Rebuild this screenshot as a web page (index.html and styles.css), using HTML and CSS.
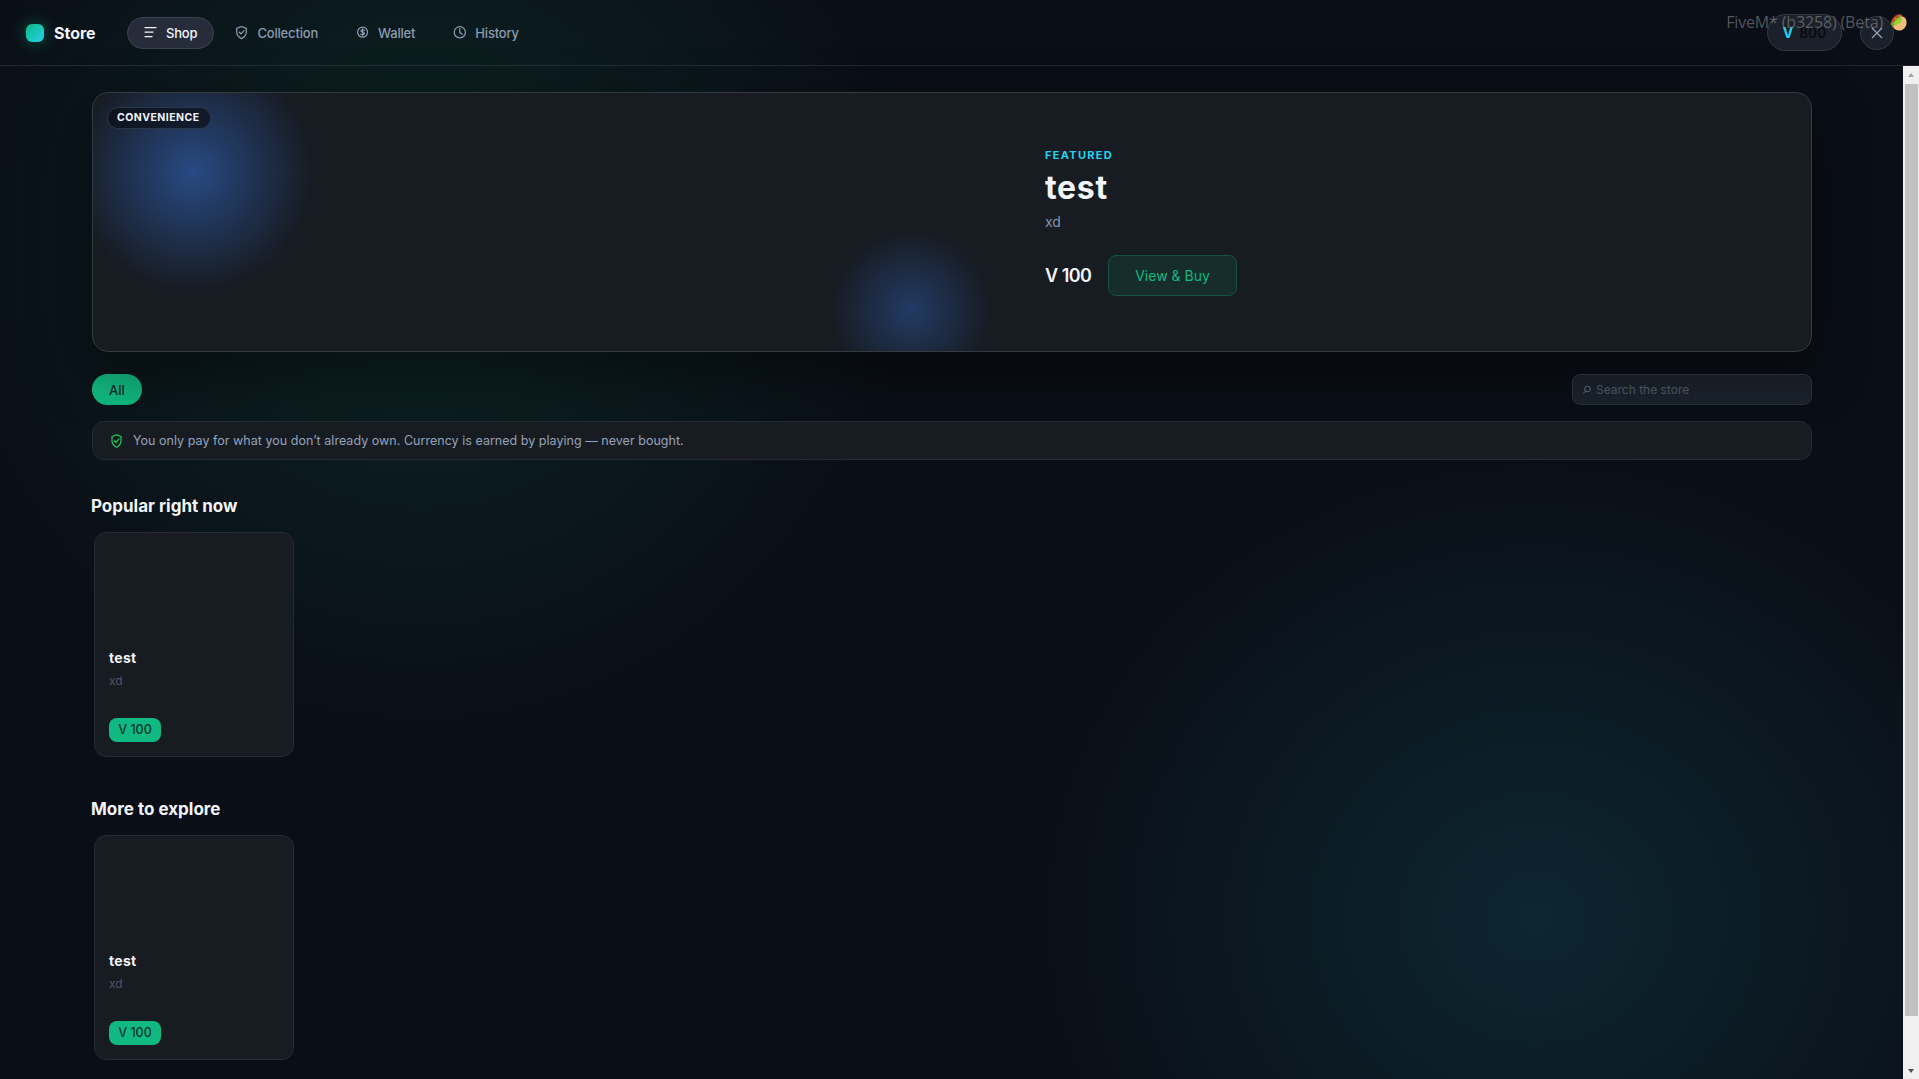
FILE: index.html
```html
<!DOCTYPE html>
<html lang="en">
  <head>
    <meta charset="UTF-8" />
    <meta name="viewport" content="width=device-width, initial-scale=1.0" />
    <title>Store</title>
    <link rel="stylesheet" href="styles.css">
  </head>
  <body>
    <header class="topbar">
      <div class="brand">
        <span class="logo"></span>
        <span class="brand-name">Store</span>
      </div>
      <nav class="tabs">
        <button class="tab active">
          <svg class="icon" viewBox="0 0 14 14"><path d="M1 1.5h11M1 6h8M1 10.5h7" /></svg>
          <span>Shop</span>
        </button>
        <button class="tab">
          <svg class="icon" viewBox="0 0 14 14"><path d="M6.5 0.5L11.3 2.3V6.3C11.3 9.1 9.3 11.2 6.5 12.6C3.7 11.2 1.7 9.1 1.7 6.3V2.3ZM4.3 6.2l1.7 1.7L9 4.6" /></svg>
          <span>Collection</span>
        </button>
        <button class="tab">
          <svg class="icon" viewBox="0 0 14 14"><circle cx="6.6" cy="6.2" r="5" /><path d="M8.4 4.3C7.9 3.7 5 3.5 5 5C5 6.6 8.4 5.7 8.4 7.5C8.4 8.9 5.3 8.8 4.800 8.100M6.700 2.800v7" /></svg>
          <span>Wallet</span>
        </button>
        <button class="tab">
          <svg class="icon" viewBox="0 0 14 14"><circle cx="6.8" cy="6.3" r="5.6" /><path d="M6.8 2.700v3.800l2.500 1.700" /></svg>
          <span>History</span>
        </button>
      </nav>
      <div class="account">
        <div class="balance"><span class="coin">V</span><span>800</span></div>
        <button class="close"><svg class="close-icon" viewBox="0 0 12 12"><path d="M1 1l10 10M11 1L1 11" /></svg></button>
      </div>
    </header>

    <div class="watermark">
      <span>FiveM* (b3258) (Beta)</span>
      <svg class="taco" viewBox="0 0 17 17">
        <path d="M0.500 10L2 5L6 1L10 0L13 2L9 14L3 13Z" fill="#b93a22" />
        <path d="M1 10L4 4L9 1L12 2L12 8L7 14L3 13Z" fill="#6fb52a" />
        <path d="M2 8l3-3M6 4l3-2" stroke="#e23c2c" stroke-width="2" />
        <path d="M3 13C5 10 7 8 9 5C11 2 14 2 15.500 4.500C18 9 16 14 12 16C9 17.200 5 16.500 3 13Z" fill="#f3bd79" />
        <path d="M4 10C5 6 9 3 12 4C13 7 9 11 5 11Z" fill="#8ed630" />
      </svg>
    </div>

    <div class="viewport">
      <main class="page">
        <section class="hero">
          <div class="hero-art"><span class="badge">CONVENIENCE</span></div>
          <div class="hero-info">
            <p class="eyebrow">FEATURED</p>
            <h1>test</h1>
            <p class="hero-text">xd</p>
            <div class="hero-buy">
              <span class="hero-price">V 100</span>
              <button class="buy">View &amp; Buy</button>
            </div>
          </div>
        </section>

        <div class="filters">
          <button class="chip">All</button>
          <label class="search">
            <svg class="search-icon" viewBox="0 0 10 10"><circle cx="5.500" cy="4" r="2.800" /><path d="M3.500 6L1.300 8.500" /></svg>
            <input type="text" placeholder="Search the store" />
          </label>
        </div>

        <div class="notice">
          <svg class="icon" viewBox="0 0 14 14"><path d="M6.500 0.800L11 2.500V6.700C11 9.700 9.100 11.800 6.500 13.200C3.900 11.800 2 9.700 2 6.700V2.500ZM4.300 6.800l1.600 1.700L8.800 5.200" /></svg>
          <span>You only pay for what you don’t already own. Currency is earned by playing — never bought.</span>
        </div>

        <section class="shelf">
          <h2>Popular right now</h2>
          <article class="card">
            <h3>test</h3>
            <p>xd</p>
            <span class="price">V 100</span>
          </article>
        </section>

        <section class="shelf">
          <h2>More to explore</h2>
          <article class="card">
            <h3>test</h3>
            <p>xd</p>
            <span class="price">V 100</span>
          </article>
        </section>
      </main>

      <div class="scrollbar">
        <span class="arrow up"></span>
        <span class="thumb"></span>
        <span class="arrow down"></span>
      </div>
    </div>
  </body>
</html>
```
FILE: styles.css
```css
* {
  margin: 0;
  padding: 0;
  box-sizing: border-box;
}

body {
  display: flex;
  flex-direction: column;
  height: 100vh;
  overflow: hidden;
  font-family: Inter, "Liberation Sans", sans-serif;
  color: #f1f5f9;
  background:
    radial-gradient(ellipse 500px 510px at 422px 245px, rgba(16, 185, 129, 0.13), transparent),
    radial-gradient(ellipse 520px 480px at 1536px 918px, rgba(34, 211, 238, 0.12), transparent),
    #0a0e16;
}

button {
  font-family: inherit;
  background: none;
  border: 1px solid transparent;
}

.icon {
  width: 14px;
  height: 14px;
  fill: none;
  stroke: currentColor;
  stroke-width: 1.25;
  stroke-linecap: round;
  stroke-linejoin: round;
}

.topbar {
  display: flex;
  align-items: center;
  flex: none;
  height: 66px;
  padding: 0 25px 0 26px;
  border-bottom: 1px solid rgba(255, 255, 255, 0.09);
}

.brand {
  display: flex;
  align-items: center;
  gap: 10px;
  width: 101px;
}

.logo {
  width: 18px;
  height: 18px;
  border-radius: 6px;
  background: linear-gradient(135deg, #10b981, #22d3ee);
  box-shadow: 0 0 16px rgba(16, 185, 129, 0.45);
}

.brand-name {
  font-size: 16px;
  font-weight: 700;
}

.tabs {
  display: flex;
  gap: 4px;
}

.tab {
  display: flex;
  align-items: center;
  gap: 8px;
  height: 32px;
  padding: 0 16px;
  border-radius: 16px;
  font-size: 13px;
  font-weight: 500;
  letter-spacing: -0.18px;
  color: #8b9bb0;
}

.tab.active {
  color: #f1f5f9;
  background: #262c39;
  border-color: #3c434e;
}

.account {
  display: flex;
  align-items: center;
  gap: 18px;
  margin-left: auto;
}

.balance {
  display: flex;
  align-items: center;
  justify-content: center;
  gap: 6px;
  width: 75px;
  height: 37px;
  border: 1px solid #343a44;
  border-radius: 19px;
  background: #1b212b;
  font-size: 14px;
  font-weight: 500;
  color: #05080d;
}

.coin {
  color: #22d3ee;
  font-weight: 700;
}

.close {
  display: flex;
  align-items: center;
  justify-content: center;
  width: 34px;
  height: 34px;
  border-color: #343a44;
  border-radius: 50%;
  background: #1b212b;
}

.close-icon {
  width: 12px;
  height: 12px;
  stroke: #94a3b8;
  stroke-width: 1.3;
}

/* client build label, drawn over the header */
.watermark {
  position: absolute;
  top: 11px;
  right: 12px;
  display: flex;
  align-items: center;
  gap: 7px;
  font-family: "Open Sans", "Noto Sans", sans-serif;
  font-size: 16px;
  letter-spacing: -0.15px;
  color: rgba(150, 150, 150, 0.55);
}

.taco {
  width: 17px;
  height: 17px;
}

.viewport {
  display: flex;
  flex: 1;
  min-height: 0;
}

.page {
  flex: 1;
  padding: 26px 91px 0 92px;
}

.hero {
  display: flex;
  height: 260px;
  border: 1px solid #363a40;
  border-radius: 16px;
  overflow: hidden;
  background: #171b22;
  box-shadow: 0 20px 60px rgba(0, 0, 0, 0.45);
}

.hero-art {
  width: 920px;
  padding: 14px;
  background:
    radial-gradient(circle 120px at 100px 79px, rgba(59, 130, 246, 0.46), transparent),
    radial-gradient(circle 80px at 818px 217px, rgba(59, 130, 246, 0.31), transparent);
}

.badge {
  display: inline-block;
  height: 22px;
  padding: 0 10px 0 9px;
  border: 1px solid #2b3647;
  border-radius: 11px;
  background: rgba(10, 14, 23, 0.7);
  font-size: 10.5px;
  font-weight: 700;
  line-height: 20px;
  letter-spacing: 0.45px;
  vertical-align: top;
}

.hero-info {
  padding: 55px 32px 0;
}

.eyebrow {
  font-size: 11px;
  font-weight: 700;
  line-height: 14px;
  letter-spacing: 1.3px;
  color: #22d3ee;
}

h1 {
  margin-top: 7px;
  font-size: 32px;
  font-weight: 700;
  line-height: 38px;
  letter-spacing: 0.7px;
}

.hero-text {
  margin-top: 6px;
  font-size: 14px;
  line-height: 18px;
  color: #8195ad;
}

.hero-buy {
  display: flex;
  align-items: center;
  gap: 16px;
  margin-top: 24px;
}

.hero-price {
  width: 47px;
  font-size: 18px;
  font-weight: 600;
  white-space: nowrap;
  letter-spacing: -0.5px;
}

.buy {
  width: 129px;
  height: 41px;
  border-color: #16523f;
  border-radius: 8px;
  background: #172d2c;
  font-size: 14px;
  color: #10b981;
}

.filters {
  display: flex;
  justify-content: space-between;
  margin-top: 22px;
}

.chip {
  width: 50px;
  height: 31px;
  border: 0;
  border-radius: 16px;
  background: linear-gradient(15deg, #10b07b 30%, #0f9568);
  font-size: 13px;
  font-weight: 500;
  color: #06281f;
}

.search {
  display: flex;
  align-items: center;
  gap: 4px;
  width: 240px;
  height: 31px;
  padding: 0 9px;
  border: 1px solid #282f39;
  border-radius: 8px;
  background: linear-gradient(#161b22, #19212b);
}

.search-icon {
  width: 10px;
  height: 10px;
  fill: none;
  stroke: #5c6878;
}

.search input {
  flex: 1;
  border: 0;
  background: none;
  font-family: inherit;
  font-size: 12px;
}

.search input::placeholder {
  color: #48525f;
}

.notice {
  display: flex;
  align-items: center;
  gap: 9px;
  height: 39px;
  margin-top: 16px;
  padding: 0 17px;
  border: 1px solid #252930;
  border-radius: 12px;
  background: #171b22;
  font-size: 12.5px;
  letter-spacing: 0.03px;
  color: #94a3b8;
}

.notice .icon {
  color: #22c55e;
}

.shelf {
  height: 303px;
  padding-top: 35px;
}

h2 {
  margin: 0 0 15px -1px;
  font-size: 17px;
  font-weight: 700;
  line-height: 22px;
}

.card {
  display: flex;
  flex-direction: column;
  align-items: flex-start;
  width: 200px;
  height: 225px;
  margin-left: 2px;
  padding: 116px 14px 0;
  border: 1px solid #262a31;
  border-radius: 12px;
  background: #171b22;
}

h3 {
  font-size: 14px;
  font-weight: 700;
  line-height: 18px;
  letter-spacing: 0.3px;
}

.card p {
  margin-top: 6px;
  font-size: 12px;
  line-height: 16px;
  color: #4d5868;
}

.price {
  width: 52px;
  height: 24px;
  margin-top: 29px;
  border-radius: 8px;
  background: #10b981;
  font-size: 12.5px;
  font-weight: 500;
  line-height: 23px;
  text-align: center;
  color: #06372a;
}

.scrollbar {
  display: flex;
  flex-direction: column;
  align-items: center;
  justify-content: space-between;
  width: 16px;
  padding: 7px 0 6px;
  background: #f0f0f0;
}

.thumb {
  width: 13px;
  height: 932px;
  margin-top: -47px;
  background: #c1c1c1;
}

.arrow {
  border: 3.5px solid transparent;
}

.up {
  border-top: 0;
  border-bottom: 4px solid #a3a3a3;
}

.down {
  border-bottom: 0;
  border-top: 4px solid #505050;
}
```
